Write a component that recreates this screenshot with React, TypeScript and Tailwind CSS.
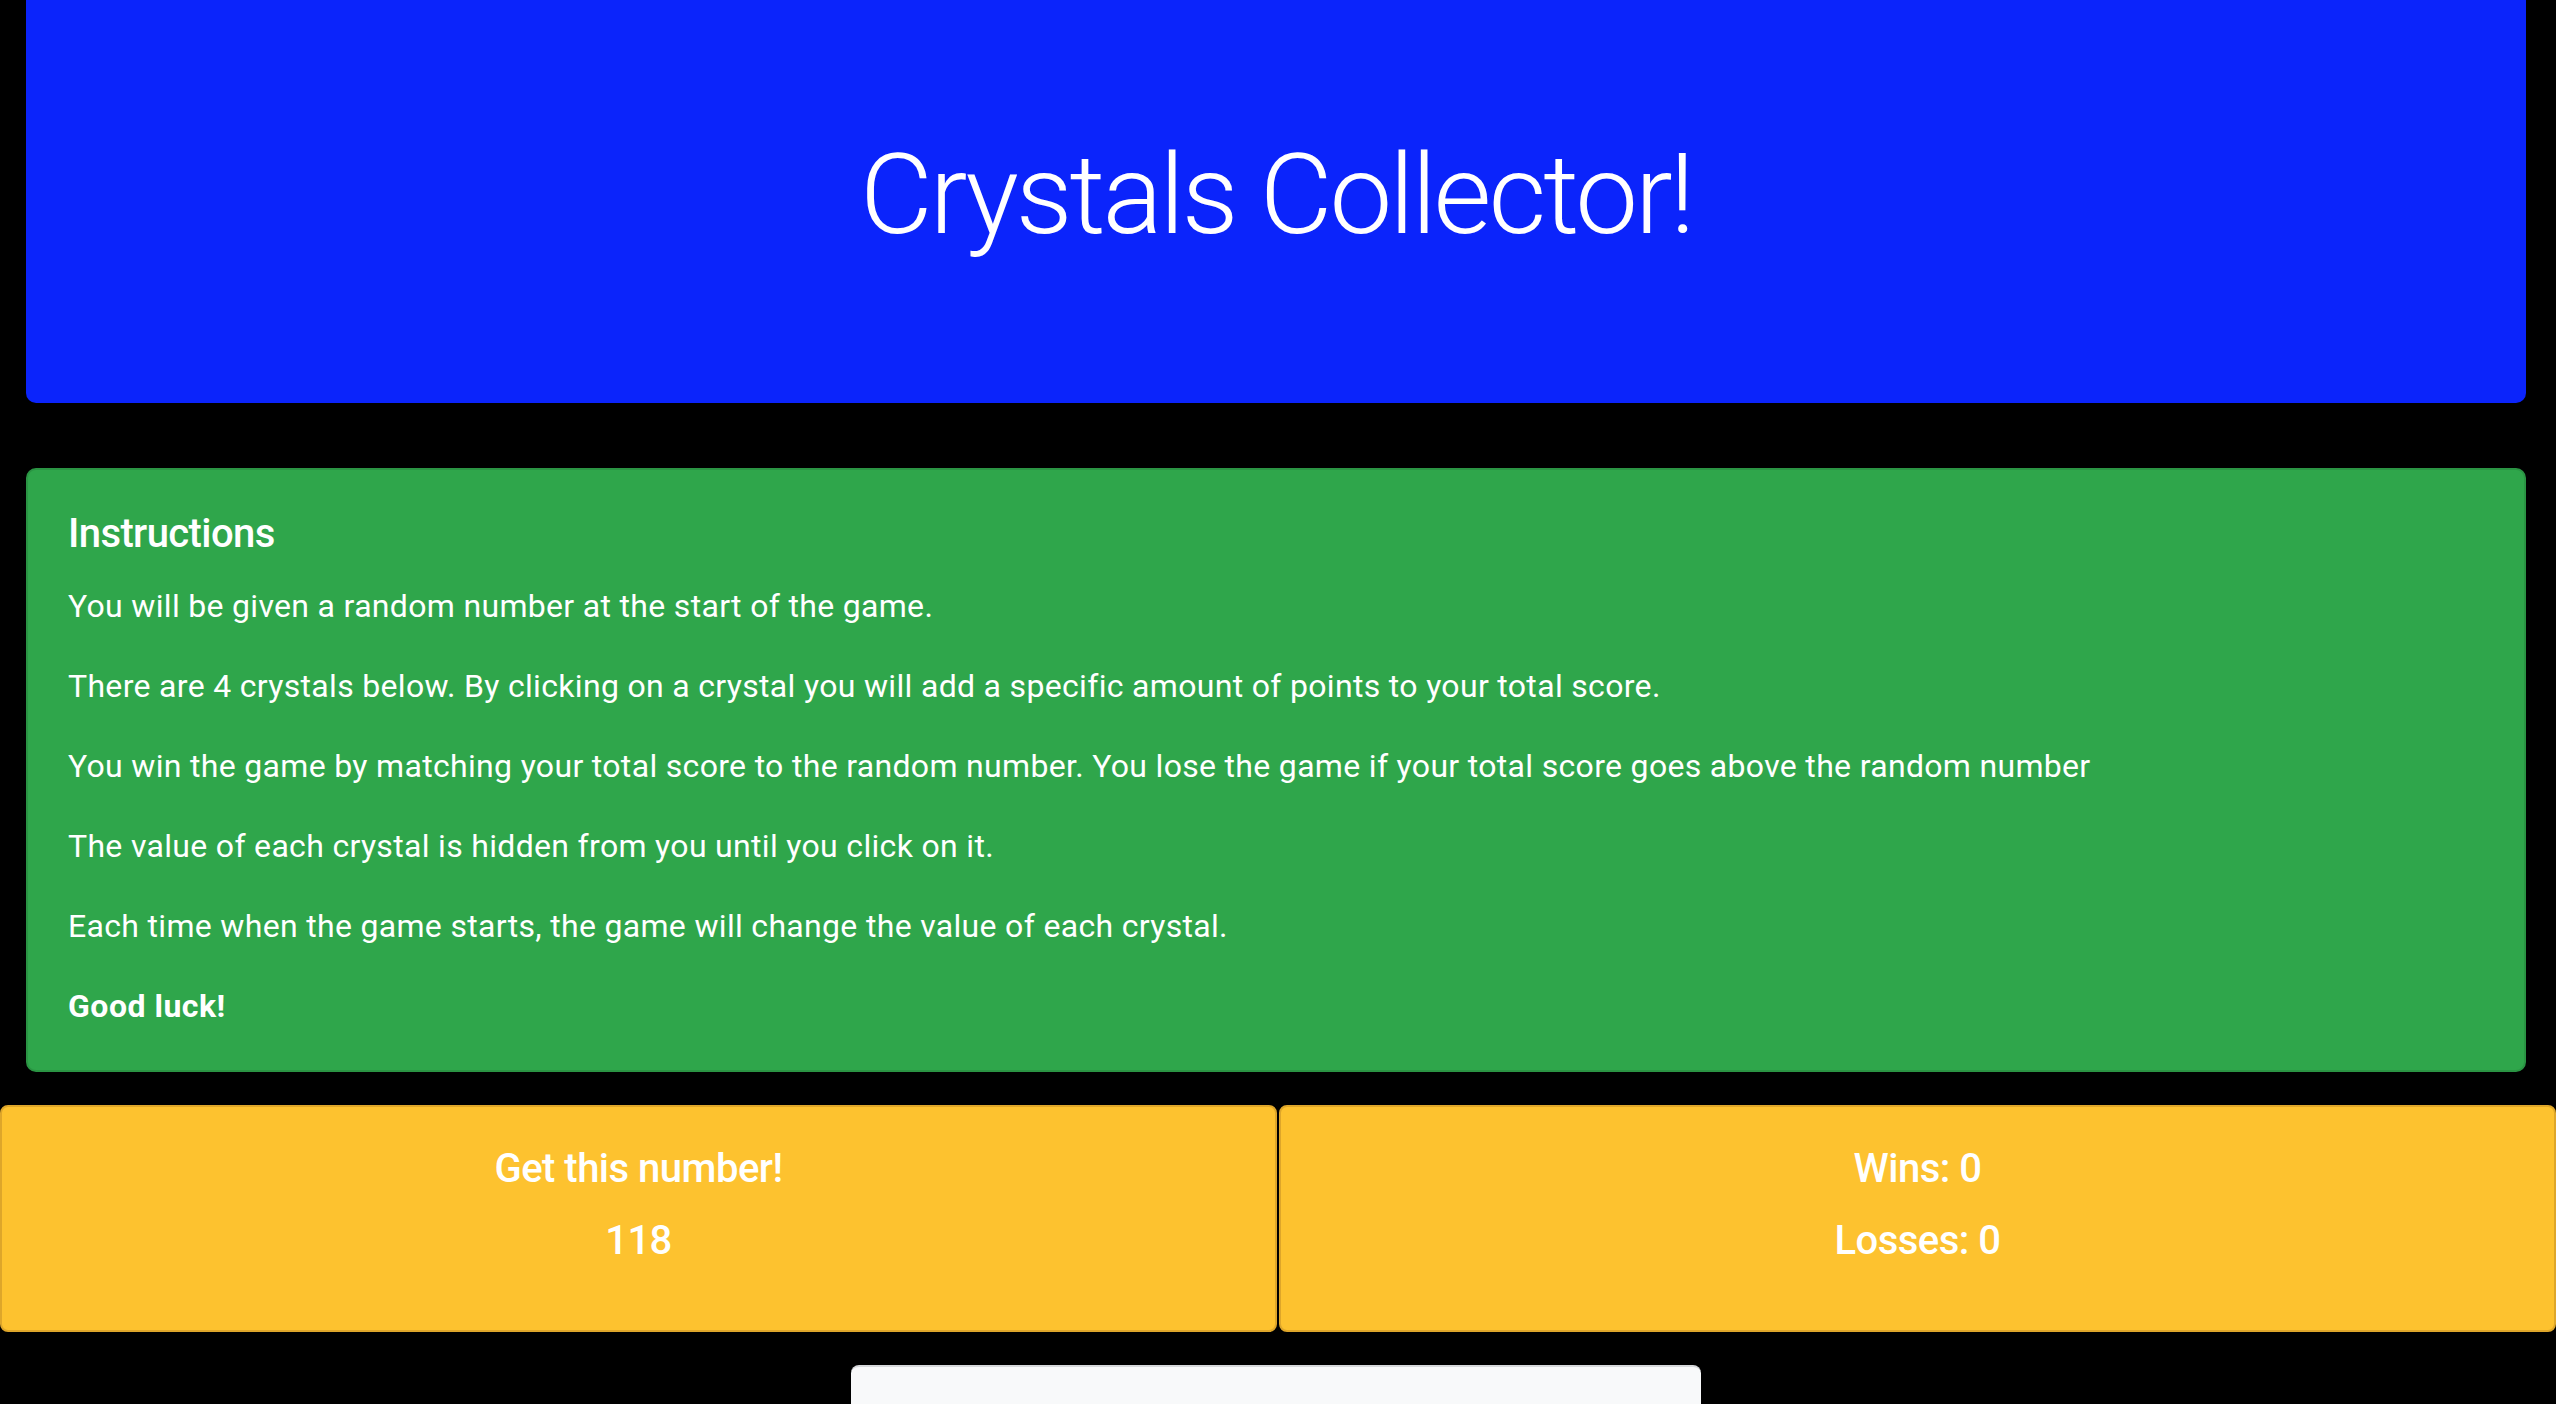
import React from "react";

export default function App() {
  const paras = [
    "You will be given a random number at the start of the game.",
    "There are 4 crystals below. By clicking on a crystal you will add a specific amount of points to your total score.",
    "You win the game by matching your total score to the random number. You lose the game if your total score goes above the random number",
    "The value of each crystal is hidden from you until you click on it.",
    "Each time when the game starts, the game will change the value of each crystal.",
  ];
  return (
    <div
      className="bg-black h-[1404px] overflow-hidden text-white"
      style={{ fontFamily: "Roboto, 'Liberation Sans', sans-serif" }}
    >
      <div className="pl-[26px] pr-[30px]">
        <div className="bg-[#0b24fb] rounded-b-[10px] h-[403px] pt-[128px] flex justify-center">
          <h1 className="text-[112px] leading-[134px] font-light tracking-[-3px]">Crystals Collector!</h1>
        </div>
        <div className="mt-[65px] bg-[#2fa64b] border-2 border-[#2a9443] rounded-[10px] p-[40px]">
          <h5 className="text-[40px] leading-[48px] font-medium mb-[24px] tracking-[-0.6px]">Instructions</h5>
          {paras.map((p, i) => (
            <p key={i} className="text-[32px] leading-[48px] mb-[32px] tracking-[0.32px]">
              {p}
            </p>
          ))}
          <p className="text-[32px] leading-[48px] font-bold tracking-[0.5px]">Good luck!</p>
        </div>
      </div>
      <div className="mt-[33px] flex gap-[2px]">
        <div className="flex-1 h-[227px] bg-[#fdc22f] border-2 border-[#dea62a] rounded-[8px] p-[38px] text-center">
          <h5 className="text-[40px] leading-[48px] font-medium mb-[24px] tracking-[-0.5px]">Get this number!</h5>
          <h5 className="text-[40px] leading-[48px] font-medium tracking-[-0.5px]">118</h5>
        </div>
        <div className="flex-1 h-[227px] bg-[#fdc22f] border-2 border-[#dea62a] rounded-[8px] p-[38px] text-center">
          <h5 className="text-[40px] leading-[48px] font-medium mb-[24px] tracking-[-0.5px]">Wins: 0</h5>
          <h5 className="text-[40px] leading-[48px] font-medium tracking-[-0.5px]">Losses: 0</h5>
        </div>
      </div>
      <div className="pl-[26px] pr-[30px] mt-[33px]">
        <div className="mx-auto w-[850px] h-[40px] bg-[#f8f9fa] border-t-2 border-[#d6d8db] rounded-t-[8px]" />
      </div>
    </div>
  );
}
